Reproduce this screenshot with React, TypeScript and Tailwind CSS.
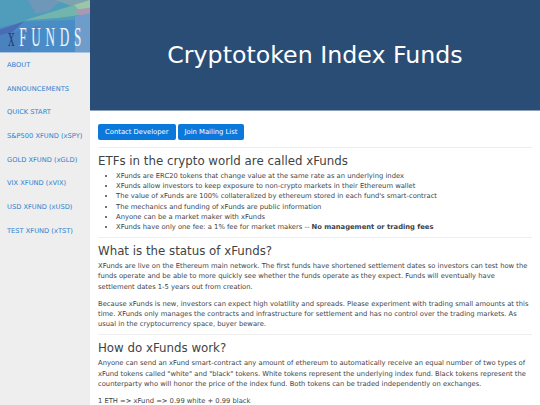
const sans = '[font-family:"DejaVu_Sans",sans-serif]';

const navLinks = [
  'ABOUT',
  'ANNOUNCEMENTS',
  'QUICK START',
  'S&P500 XFUND (xSPY)',
  'GOLD XFUND (xGLD)',
  'VIX XFUND (xVIX)',
  'USD XFUND (xUSD)',
  'TEST XFUND (xTST)',
];

const bullets = [
  'XFunds are ERC20 tokens that change value at the same rate as an underlying index',
  'XFunds allow investors to keep exposure to non-crypto markets in their Ethereum wallet',
  "The value of xFunds are 100% collateralized by ethereum stored in each fund's smart-contract",
  'The mechanics and funding of xFunds are public information',
  'Anyone can be a market maker with xFunds',
];

function Logo() {
  return (
    <div className="relative h-[53px] w-[90px] overflow-hidden border-b border-[#a9c4e0] bg-[#4f8ec4]">
      <svg viewBox="0 0 90 53" className="absolute inset-0 h-full w-full" preserveAspectRatio="none">
        <rect width="90" height="53" fill="#4a8cc6" />
        <polygon points="0,0 90,0 90,20 24,22 0,28" fill="#4f9dbb" />
        <polygon points="28,0 62,0 48,12 36,14" fill="#6f97b8" />
        <polygon points="55,0 90,0 90,5 74,7" fill="#7da3b0" />
        <polygon points="24,21 74,5 82,15 60,18" fill="#72b5ad" />
        <polygon points="74,5 90,0 90,8 80,12" fill="#9cc6a8" />
        <polygon points="74,10 90,8 90,16 80,16" fill="#a798b4" />
        <polygon points="0,30 24,22 12,33 0,36" fill="#4a6cb4" />
        <polygon points="0,36 40,26 30,53 0,53" fill="#4a82c0" />
        <polygon points="75,16 90,14 90,53 75,53" fill="#6e9ccb" />
      </svg>
      <div className="absolute bottom-[1px] left-[8px] flex origin-bottom-left scale-x-[0.47] items-baseline whitespace-nowrap font-['Liberation_Serif',serif] text-[28px] leading-none tracking-[10px]">
        <span className="text-[#23406e]">x</span>
        <span className="text-white/90">FUNDS</span>
      </div>
    </div>
  );
}

function Sidebar() {
  return (
    <aside className="w-[90px] shrink-0 bg-[#eeeeee]">
      <Logo />
      <nav className="flex flex-col">
        {navLinks.map((link) => (
          <a key={link} href="#" className="whitespace-nowrap py-[6.85px] pl-[7px] text-[6.7px] leading-[10px] text-[#2a7fd0]">
            {link}
          </a>
        ))}
      </nav>
    </aside>
  );
}

export default function App() {
  return (
    <div className={`flex h-[405px] w-[540px] overflow-hidden bg-white text-[6.78px] leading-[10.2px] text-[#404346] ${sans}`}>
      <Sidebar />
      <main className="min-w-0 flex-1">
        <header className="flex h-[111px] items-center justify-center border-b border-[#8ba0b8] bg-[#2a4d75] pt-[1px]">
          <h1 className="text-[23.7px] font-normal leading-none text-white">Cryptotoken Index Funds</h1>
        </header>
        <div className="px-[8px] pt-[13px]">
          <div className="flex gap-[2px]">
            <button className="h-[16px] rounded-[2px] bg-[#0b78dc] px-[7px] text-[6.8px] text-white">Contact Developer</button>
            <button className="h-[16px] rounded-[2px] bg-[#0b78dc] px-[7px] text-[6.8px] text-white">Join Mailing List</button>
          </div>
          <hr className="mt-[7px] border-[#eeeeee]" />
          <h2 className="mt-[6px] text-[11.8px] font-normal leading-[15px]">ETFs in the crypto world are called xFunds</h2>
          <ul className="mt-[2px] list-disc pl-[18px]">
            {bullets.map((b) => (
              <li key={b}>{b}</li>
            ))}
            <li>
              XFunds have only one fee: a 1% fee for market makers -- <strong className="font-bold">No management or trading fees</strong>
            </li>
          </ul>
          <hr className="mt-[5px] border-[#eeeeee]" />
          <h2 className="mt-[6px] text-[11.8px] font-normal leading-[15px]">What is the status of xFunds?</h2>
          <p className="mt-[2px]">
            XFunds are live on the Ethereum main network. The first funds have shortened settlement dates so investors can test how the funds operate and be able to more quickly see whether the funds operate as they expect. Funds will eventually have settlement dates 1-5 years out from creation.
          </p>
          <p className="mt-[7px]">
            Because xFunds is new, investors can expect high volatility and spreads. Please experiment with trading small amounts at this time. XFunds only manages the contracts and infrastructure for settlement and has no control over the trading markets. As usual in the cryptocurrency space, buyer beware.
          </p>
          <hr className="mt-[5px] border-[#eeeeee]" />
          <h2 className="mt-[6px] text-[11.8px] font-normal leading-[15px]">How do xFunds work?</h2>
          <p className="mt-[2px]">
            Anyone can send an xFund smart-contract any amount of ethereum to automatically receive an equal number of two types of xFund tokens called "white" and "black" tokens. White tokens represent the underlying index fund. Black tokens represent the counterparty who will honor the price of the index fund. Both tokens can be traded independently on exchanges.
          </p>
          <p className="mt-[7px]">{'1 ETH => xFund => 0.99 white + 0.99 black'}</p>
        </div>
      </main>
    </div>
  );
}
